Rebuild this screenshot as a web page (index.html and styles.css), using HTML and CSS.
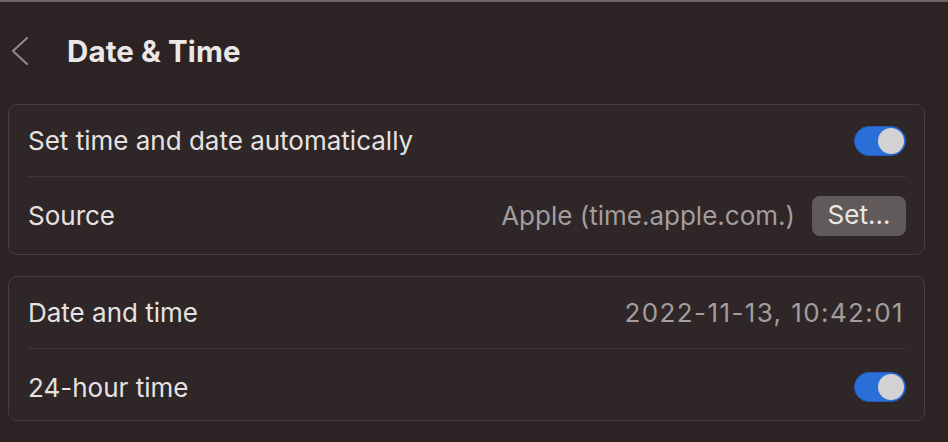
FILE: index.html
```html
<!DOCTYPE html>
<html>
<head>
<meta charset="utf-8">
<link rel="stylesheet" href="styles.css">
</head>
<body>
<div class="page">
  <header class="header">
    <svg class="back" width="20" height="30" viewBox="0 0 20 30">
      <polyline points="16,2 2,15 16,28" fill="none" stroke="#8e8889" stroke-width="2.2" stroke-linecap="round" stroke-linejoin="round"/>
    </svg>
    <h1 class="title">Date &amp; Time</h1>
  </header>
  <section class="card">
    <div class="row row-a">
      <span class="label">Set time and date automatically</span>
      <span class="toggle"><span class="knob"></span></span>
    </div>
    <div class="divider"></div>
    <div class="row row-b">
      <span class="label">Source</span>
      <span class="right">
        <span class="value">Apple (time.apple.com.)</span>
        <span class="button">Set…</span>
      </span>
    </div>
  </section>
  <section class="card">
    <div class="row row-a">
      <span class="label">Date and time</span>
      <span class="value date">2022-11-13, 10:42:01</span>
    </div>
    <div class="divider"></div>
    <div class="row row-a row-low">
      <span class="label">24-hour time</span>
      <span class="toggle"><span class="knob"></span></span>
    </div>
  </section>
</div>
</body>
</html>
```
FILE: styles.css
```css
html, body {
  margin: 0;
  padding: 0;
  background: #2b2324;
}
body {
  width: 948px;
  height: 442px;
  overflow: hidden;
  font-family: Inter, "Noto Sans", sans-serif;
  color: #e6e2e2;
  border-top: 2px solid #6b6566;
  box-sizing: border-box;
}
.page {
  padding: 0 23px 0 8px;
  display: flex;
  flex-direction: column;
  gap: 21px;
}
.header {
  height: 98px;
  margin-bottom: -17px;
  display: flex;
  align-items: center;
}
.back {
  margin-left: 3px;
  width: 20px;
  height: 30px;
}
.title {
  margin: 0 0 0 36px;
  font-size: 29.5px;
  font-weight: 700;
  letter-spacing: 0.1px;
  color: #ebe7e7;
}
.card {
  border: 1px solid #463e3f;
  border-radius: 9px;
  background: #2e2627;
}
.row {
  display: flex;
  align-items: center;
  justify-content: space-between;
  padding: 0 18px 0 19px;
  font-size: 26px;
  box-sizing: border-box;
}
.row-a { height: 71px; }
.row-b { height: 77px; }
.row-low { padding-top: 5px; }
.divider {
  height: 1px;
  background: #3e3637;
  margin: 0 18px 0 19px;
}
.label { color: #e6e2e2; }
.value { color: #a39d9e; }
.date {
  letter-spacing: 1.4px;
  margin-right: 2px;
}
.right {
  display: flex;
  align-items: center;
  gap: 17px;
}
.button {
  width: 94px;
  height: 40px;
  box-sizing: border-box;
  border-radius: 8px;
  background: #615a5a;
  color: #eae6e6;
  display: flex;
  align-items: center;
  justify-content: center;
  font-size: 26px;
  padding-bottom: 2px;
}
.toggle {
  width: 52px;
  height: 30px;
  box-sizing: border-box;
  border-radius: 15px;
  background: #2a6ed8;
  border: 1px solid #235fb8;
  display: flex;
  align-items: center;
  justify-content: flex-end;
  padding-right: 1px;
}
.knob {
  width: 26px;
  height: 26px;
  border-radius: 50%;
  background: #d5d2d3;
}
```
